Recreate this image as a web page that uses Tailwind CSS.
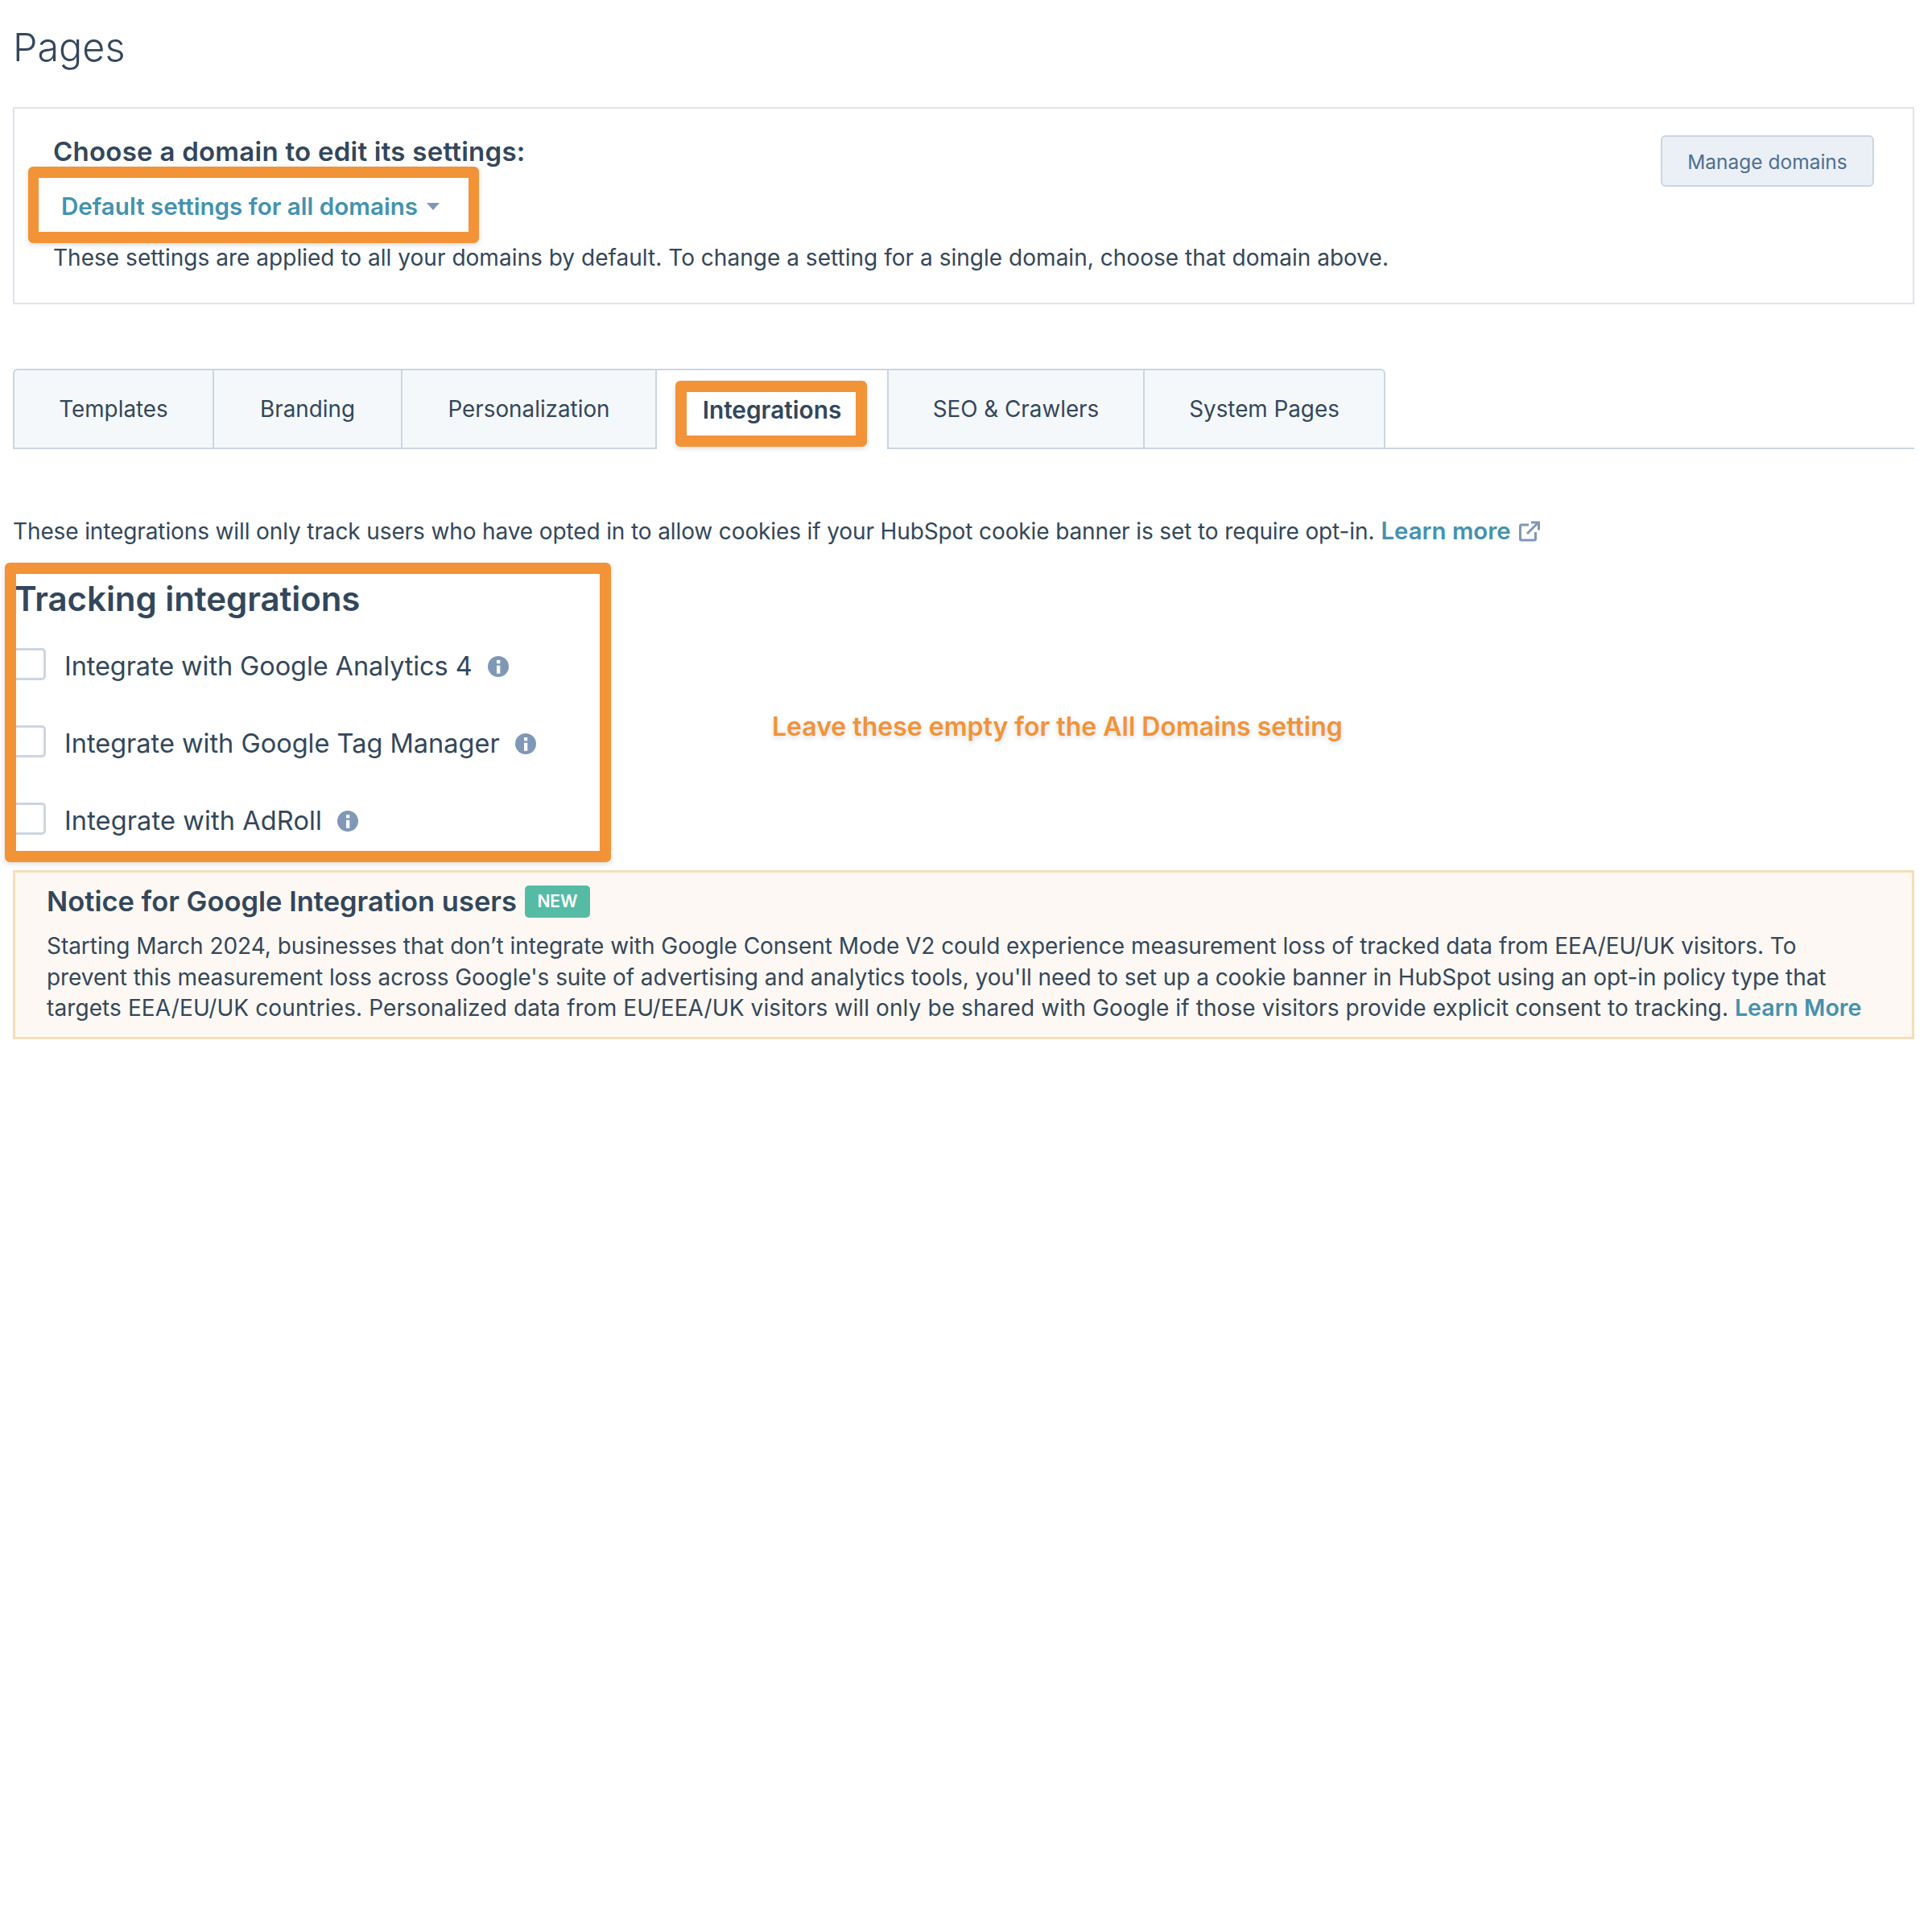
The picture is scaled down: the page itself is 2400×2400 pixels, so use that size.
<!DOCTYPE html>
<html><head><meta charset="utf-8"><script src="https://cdn.jsdelivr.net/npm/@tailwindcss/browser@4"></script></head>
<body class="bg-white">
<div class="relative w-[2400px] h-[2400px] overflow-hidden pl-[16px] pr-[22px] font-['Inter',sans-serif] text-[#33475b]">
  <h1 class="h-[133px] pt-[29px] text-[48.500px] leading-[60px] font-light">Pages</h1>

  <section class="relative h-[245px] border-2 border-[#dfe3eb] pl-[48px] pt-[33px]">
    <h2 class="text-[33px] leading-[40px] font-semibold tracking-[0.25px]">Choose a domain to edit its settings:</h2>
    <div class="flex items-center h-[48px] mt-[24px] pl-[10px] gap-[11px] text-[29.600px] font-semibold text-[#4492b0]">Default settings for all domains
      <svg class="w-[16px] h-[9px]" viewBox="0 0 16 9"><path d="M0 0h16L8 9z" fill="#7f98b8"/></svg>
    </div>
    <p class="mt-[20px] text-[28px] leading-[40px] tracking-[0.025px] whitespace-nowrap">These settings are applied to all your domains by default. To change a setting for a single domain, choose that domain above.</p>
    <button class="absolute left-[2045px] top-[33px] w-[265px] h-[64px] pt-[2px] rounded-[6px] border-2 border-[#cbd6e2] bg-[#eaf0f6] text-[24.500px] text-[#506e91]">Manage domains</button>
  </section>

  <nav class="flex h-[100px] mt-[80px] border-b-2 border-[#cbd6e2]">
    <div class="flex items-center justify-center w-[250px] h-[100px] pt-[2px] bg-[#f5f8fa] border-2 border-[#cbd6e2] rounded-tl-[6px] text-[27.800px]">Templates</div>
    <div class="flex items-center justify-center w-[234px] h-[100px] pt-[2px] bg-[#f5f8fa] border-2 border-l-0 border-[#cbd6e2] text-[27.800px]">Branding</div>
    <div class="flex items-center justify-center w-[316px] h-[100px] pt-[2px] bg-[#f5f8fa] border-2 border-l-0 border-[#cbd6e2] text-[27.800px]">Personalization</div>
    <div class="flex items-center justify-center w-[286px] h-[100px] bg-white border-t-2 border-[#cbd6e2] text-[29.800px] font-semibold">Integrations</div>
    <div class="flex items-center justify-center w-[320px] h-[100px] pt-[2px] bg-[#f5f8fa] border-2 border-[#cbd6e2] text-[27.800px]">SEO &amp; Crawlers</div>
    <div class="flex items-center justify-center w-[299px] h-[100px] pt-[2px] bg-[#f5f8fa] border-2 border-l-0 border-[#cbd6e2] rounded-tr-[6px] text-[27.800px]">System Pages</div>
  </nav>

  <p class="flex items-center h-[40px] mt-[82px] text-[28px] tracking-[-0.120px] whitespace-nowrap">These integrations will only track users who have opted in to allow cookies if your HubSpot cookie banner is set to require opt-in.
    <a class="ml-[8px] text-[29.400px] tracking-normal font-semibold text-[#4492b0]">Learn more</a>
    <svg class="ml-[10px] w-[26px] h-[26px]" viewBox="0 0 26 26" fill="none" stroke="#7f98b8" stroke-width="3"><path d="M12 5H3a1.500 1.500 0 0 0-1.500 1.500v16A1.500 1.500 0 0 0 3 24h16a1.500 1.500 0 0 0 1.500-1.500V14"/><path d="M10 16L23 3"/><path d="M15 2h9.500v9.500"/></svg>
  </p>

  <h2 class="mt-[39px] ml-[2px] text-[42px] leading-[50px] font-semibold tracking-[-0.050px]">Tracking integrations</h2>
  <ul class="mt-[36px] flex flex-col gap-[56px]">
    <li class="flex items-center h-[40px] text-[32.500px]"><span class="w-[41px] h-[40px] rounded-[5px] border-[3px] border-[#cbd6e2] bg-white mr-[23px]"></span><span class="mt-[6px] tracking-[-0.090px]">Integrate with Google Analytics 4</span>
      <svg class="ml-[19px] w-[26px] h-[26px] mt-[6px]" viewBox="0 0 26 26"><circle cx="13" cy="13" r="13" fill="#7f98b8"/><path d="M11 5h4.300v4.300H11zM11 11.700h4.300v10H11z" fill="#fff"/></svg></li>
    <li class="flex items-center h-[40px] text-[32.500px]"><span class="w-[41px] h-[40px] rounded-[5px] border-[3px] border-[#cbd6e2] bg-white mr-[23px]"></span><span class="mt-[6px]">Integrate with Google Tag Manager</span>
      <svg class="ml-[19px] w-[26px] h-[26px] mt-[6px]" viewBox="0 0 26 26"><circle cx="13" cy="13" r="13" fill="#7f98b8"/><path d="M11 5h4.300v4.300H11zM11 11.700h4.300v10H11z" fill="#fff"/></svg></li>
    <li class="flex items-center h-[40px] text-[32.500px]"><span class="w-[41px] h-[40px] rounded-[5px] border-[3px] border-[#cbd6e2] bg-white mr-[23px]"></span><span class="mt-[6px] tracking-[0.120px]">Integrate with AdRoll</span>
      <svg class="ml-[19px] w-[26px] h-[26px] mt-[6px]" viewBox="0 0 26 26"><circle cx="13" cy="13" r="13" fill="#7f98b8"/><path d="M11 5h4.300v4.300H11zM11 11.700h4.300v10H11z" fill="#fff"/></svg></li>
  </ul>

  <section class="mt-[44px] h-[210px] border-[3px] border-[#f5deb8] bg-[#fdf8f3] pl-[39px] pt-[16px]">
    <div class="flex items-center h-[40px]"><h3 class="text-[34.500px] font-semibold">Notice for Google Integration users</h3><span class="ml-[10px] flex items-center justify-center w-[81px] h-[40px] rounded-[5px] bg-[#55bba5] text-white text-[21px] font-semibold">NEW</span></div>
    <p class="mt-[16px] text-[28px] leading-[38.500px] whitespace-nowrap">
      <span class="block tracking-[-0.040px]">Starting March 2024, businesses that don’t integrate with Google Consent Mode V2 could experience measurement loss of tracked data from EEA/EU/UK visitors. To</span>
      <span class="block tracking-[-0.055px]">prevent this measurement loss across Google's suite of advertising and analytics tools, you'll need to set up a cookie banner in HubSpot using an opt-in policy type that</span>
      <span class="block"><span class="tracking-[0.100px]">targets EEA/EU/UK countries. Personalized data from EU/EEA/UK visitors will only be shared with Google if those visitors provide explicit consent to tracking.</span> <a class="text-[28.600px] font-semibold text-[#4492b0]">Learn More</a></span>
    </p>
  </section>

  <div class="absolute left-[35px] top-[207px] w-[560px] h-[95px] rounded-[6px] border-x-[13px] border-y-[14px] border-[#f29337] shadow-[0_2px_6px_rgba(0,0,0,0.15)]"></div>
  <div class="absolute left-[839px] top-[473px] w-[238px] h-[82px] rounded-[6px] border-[14px] border-[#f29337] shadow-[0_2px_6px_rgba(0,0,0,0.15)]"></div>
  <div class="absolute left-[6px] top-[699px] w-[753px] h-[372px] rounded-[6px] border-[14px] border-[#f29337] shadow-[0_2px_6px_rgba(0,0,0,0.15)]"></div>
  <div class="absolute left-[959px] top-[883px] text-[32px] leading-[40px] font-semibold text-[#f29337] whitespace-nowrap [text-shadow:0_3px_6px_rgba(0,0,0,0.15)]">Leave these empty for the All Domains setting</div>
</div>
</body></html>
